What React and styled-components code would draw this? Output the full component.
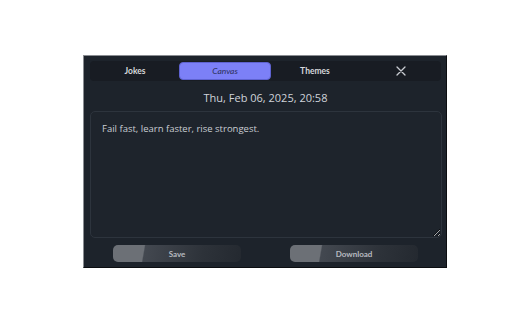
import styled, { createGlobalStyle } from "styled-components";

const Global = createGlobalStyle`
  html, body {
    margin: 0;
    background: #ffffff;
  }
  #root {
    width: 512px;
    height: 320px;
  }
`;

const Page = styled.div`
  width: 512px;
  height: 320px;
  padding: 55px 0 0 83px;
  box-sizing: border-box;
`;

const Panel = styled.div`
  width: 364px;
  height: 213px;
  box-sizing: border-box;
  background: #1d232b;
  border-top: 1px solid #8a8d92;
  border-left: 1px solid #8a8d92;
  border-right: 1px solid #0b0d10;
  border-bottom: 1px solid #0b0d10;
  padding: 5px 5px 0 6px;
  display: flex;
  flex-direction: column;
`;

const TabBar = styled.div`
  height: 20px;
  background: #181c23;
  border-radius: 4px;
  display: grid;
  grid-template-columns: 88px 92px 88px 84px;
  align-items: center;
  padding: 0 0 0 1px;
`;

const Tab = styled.div`
  height: 16px;
  border-radius: 4px;
  display: flex;
  align-items: center;
  justify-content: center;
  font-family: "Lato", "Liberation Sans", sans-serif;
  font-weight: ${(p) => (p.$active ? 400 : 700)};
  font-style: ${(p) => (p.$active ? "italic" : "normal")};
  font-size: 8.5px;
  color: ${(p) => (p.$active ? "#2b2f58" : "#d6d8dc")};
  background: ${(p) => (p.$active ? "#7c80f7" : "transparent")};
  border: ${(p) => (p.$active ? "1px solid #5e62d0" : "1px solid transparent")};
`;

const Close = styled.div`
  display: flex;
  align-items: center;
  justify-content: center;
  color: #c9ccd2;
`;

const DateLine = styled.div`
  margin-top: 9px;
  height: 16px;
  text-align: center;
  font-family: "Open Sans", "Noto Sans", sans-serif;
  font-size: 11px;
  color: #cfd3da;
`;

const Note = styled.textarea`
  margin-top: 5px;
  width: 352px;
  height: 127px;
  box-sizing: border-box;
  background: #1e242c;
  border: 1px solid #2d343d;
  border-radius: 5px;
  padding: 10px 11px;
  font-family: "Open Sans", "Noto Sans", sans-serif;
  font-size: 9.5px;
  color: #c9cdd3;
  outline: none;
  resize: both;
`;

const Actions = styled.div`
  margin-top: 7px;
  display: flex;
  justify-content: space-between;
  padding: 0 23px 0 23px;
`;

const Button = styled.button`
  width: 128px;
  height: 17px;
  border: none;
  border-radius: 5px;
  background: linear-gradient(100deg, #6c7076 0%, #6c7076 24%, #434850 25%, #2d3239 70%, #242930 100%);
  font-family: "Lato", "Liberation Sans", sans-serif;
  font-weight: 700;
  font-size: 8px;
  color: #b7bac0;
  padding: 0;
  cursor: pointer;
`;

export default function App() {
  return (
    <>
      <Global />
      <Page>
        <Panel>
          <TabBar>
            <Tab>Jokes</Tab>
            <Tab $active>Canvas</Tab>
            <Tab>Themes</Tab>
            <Close>
              <svg width="10" height="10" viewBox="0 0 10 10">
                <path d="M1 1 L9 9 M9 1 L1 9" stroke="currentColor" strokeWidth="1.3" strokeLinecap="round" />
              </svg>
            </Close>
          </TabBar>
          <DateLine>Thu, Feb 06, 2025, 20:58</DateLine>
          <Note defaultValue="Fail fast, learn faster, rise strongest." />
          <Actions>
            <Button>Save</Button>
            <Button>Download</Button>
          </Actions>
        </Panel>
      </Page>
    </>
  );
}
